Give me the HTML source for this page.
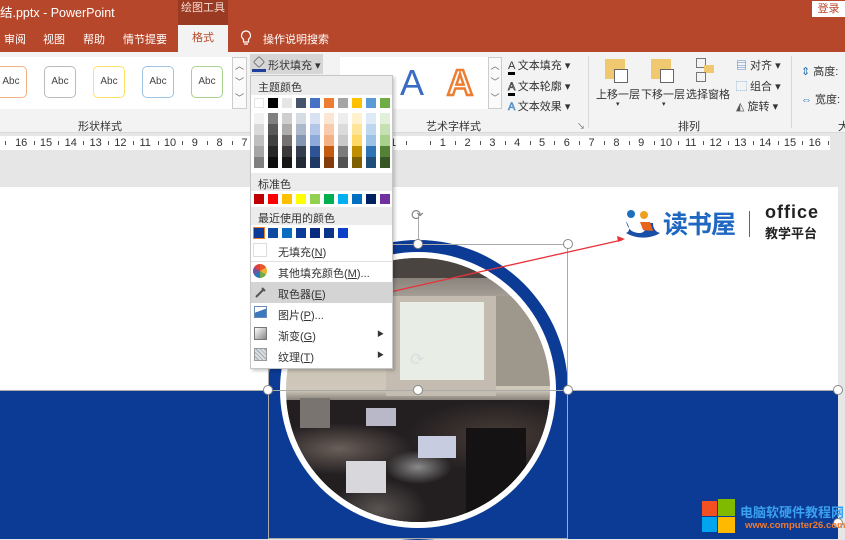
<!DOCTYPE html>
<html><head><meta charset="utf-8"><style>
*{margin:0;padding:0;box-sizing:border-box}
body{width:845px;height:539px;position:relative;overflow:hidden;font-family:"Liberation Sans","Noto Sans CJK SC",sans-serif;font-size:11px;color:#333;background:#e6e6e6}
.a{position:absolute}
.sw{position:absolute;width:10px;height:10px}
.mi{position:absolute;left:28px;font-size:11px;color:#333}
.abc{position:absolute;top:66px;width:32px;height:32px;border-radius:5px;border:1.5px solid;background:#fff;font-size:10px;text-align:center;line-height:30px;color:#444}
.rn{position:absolute;top:136px;font-size:11px;line-height:14px;color:#333;width:20px;margin-left:-10px;text-align:center}
.rt{position:absolute;top:141px;width:1px;height:4px;background:#555}
</style></head><body>
<div class="a" style="left:0;top:0;width:845px;height:52px;background:#B7472A"></div>
<div class="a" style="left:0;top:2px;color:#fff;font-size:12.5px">结.pptx - PowerPoint</div>
<div class="a" style="left:178px;top:0;width:50px;height:25px;background:#9A3A22;color:#f5d9d0;font-size:11px;text-align:center;line-height:17px">绘图工具</div>
<div class="a" style="left:812px;top:1px;width:33px;height:16px;background:#fff;color:#B7472A;font-size:11px;text-align:center;line-height:16px">登录</div>
<div class="a" style="left:4px;top:31px;color:#fff;font-size:11px">审阅</div>
<div class="a" style="left:43px;top:31px;color:#fff;font-size:11px">视图</div>
<div class="a" style="left:83px;top:31px;color:#fff;font-size:11px">帮助</div>
<div class="a" style="left:123px;top:31px;color:#fff;font-size:11px">情节提要</div>
<div class="a" style="left:178px;top:25px;width:50px;height:27px;background:#F3F3F3;color:#B7472A;font-size:11px;text-align:center;line-height:26px">格式</div>
<svg class="a" style="left:240px;top:30px" width="12" height="16"><path d="M6 1a4.5 4.5 0 0 0-2.5 8.2V12h5V9.2A4.5 4.5 0 0 0 6 1zM4 14h4" fill="none" stroke="#fff" stroke-width="1.2"/></svg>
<div class="a" style="left:263px;top:31px;color:#fff;font-size:11px">操作说明搜索</div>
<div class="a" style="left:0;top:52px;width:845px;height:81px;background:#F3F3F3;border-bottom:1px solid #dadada"></div>
<div class="a" style="left:0;top:57px;width:232px;height:52px;background:#fff"></div>
<div class="abc" style="left:-5px;border-color:#F4B183">Abc</div>
<div class="abc" style="left:44px;border-color:#bbb">Abc</div>
<div class="abc" style="left:93px;border-color:#FFE066">Abc</div>
<div class="abc" style="left:142px;border-color:#9DC3E6">Abc</div>
<div class="abc" style="left:191px;border-color:#A9D18E">Abc</div>
<div class="a" style="left:232px;top:57px;width:15px;height:52px;border:1px solid #ccc;background:#fafafa;font-size:9px;color:#666;text-align:center;line-height:16px">︿<br>﹀<br>﹀</div>
<div class="a" style="left:78px;top:118px">形状样式</div>
<div class="a" style="left:250px;top:54px;width:73px;height:20px;background:#d6d6d6"></div>
<div class="a" style="left:253px;top:56px;width:12px;height:12px;border:1px solid #555;border-radius:2px;transform:rotate(45deg) scale(.7)"></div>
<div class="a" style="left:252px;top:69px;width:14px;height:3px;background:#1f3f9a"></div>
<div class="a" style="left:268px;top:57px;font-size:11px">形状填充 ▾</div>
<div class="a" style="left:340px;top:57px;width:148px;height:52px;background:#fff"></div>
<div class="a" style="left:400px;top:62px;font-size:36px;color:#3a6bc4">A</div>
<div class="a" style="left:447px;top:62px;font-size:36px;color:#fff;-webkit-text-stroke:2.5px #ED7D31;font-weight:bold">A</div>
<div class="a" style="left:488px;top:57px;width:14px;height:52px;border:1px solid #ccc;background:#fafafa;font-size:9px;color:#666;text-align:center;line-height:16px">︿<br>﹀<br>﹀</div>
<div class="a" style="left:508px;top:57px;font-size:11px"><span style="border-bottom:3px solid #000">A</span> 文本填充 ▾</div>
<div class="a" style="left:508px;top:78px;font-size:11px"><span style="border-bottom:3px solid #000;color:#fff;-webkit-text-stroke:.7px #333">A</span> 文本轮廓 ▾</div>
<div class="a" style="left:508px;top:98px;font-size:11px"><span style="color:#9DC3E6;-webkit-text-stroke:.5px #2e75b6">A</span> 文本效果 ▾</div>
<div class="a" style="left:426px;top:118px">艺术字样式</div>
<div class="a" style="left:588px;top:56px;width:1px;height:72px;background:#d8d8d8"></div>
<div class="a" style="left:605px;top:59px;width:20px;height:20px;background:#F0C870"></div>
<div class="a" style="left:614px;top:69px;width:14px;height:14px;border:1px solid #666;background:#fff"></div>
<div class="a" style="left:651px;top:59px;width:20px;height:20px;background:#F0C870"></div>
<div class="a" style="left:660px;top:69px;width:14px;height:14px;border:1px solid #666;background:#fff;z-index:1"></div>
<div class="a" style="left:696px;top:58px;width:10px;height:10px;border:1px solid #777"></div>
<div class="a" style="left:704px;top:65px;width:10px;height:8px;background:#F0C870"></div>
<div class="a" style="left:696px;top:72px;width:10px;height:10px;border:1px solid #777"></div>
<div class="a" style="left:596px;top:86px;font-size:11px">上移一层</div>
<div class="a" style="left:641px;top:86px;font-size:11px">下移一层</div>
<div class="a" style="left:686px;top:86px;font-size:11px">选择窗格</div>
<div class="a" style="left:616px;top:100px;font-size:7px">▾</div>
<div class="a" style="left:662px;top:100px;font-size:7px">▾</div>
<div class="a" style="left:736px;top:57px;font-size:11px"><span style="color:#2e75b6">▤</span> 对齐 ▾</div>
<div class="a" style="left:736px;top:78px;font-size:11px"><span style="color:#2e75b6">⬚</span> 组合 ▾</div>
<div class="a" style="left:736px;top:98px;font-size:11px"><span style="color:#555">◭</span> 旋转 ▾</div>
<div class="a" style="left:678px;top:118px">排列</div>
<div class="a" style="left:791px;top:56px;width:1px;height:72px;background:#d8d8d8"></div>
<div class="a" style="left:801px;top:63px;font-size:11px"><span style="color:#2e75b6">⇕</span> 高度:</div>
<div class="a" style="left:801px;top:91px;font-size:11px"><span style="color:#2e75b6">⇔</span> 宽度:</div>
<div class="a" style="left:838px;top:118px">大</div>
<div class="a" style="left:577px;top:121px;font-size:8px;color:#666">↘</div>
<div class="a" style="left:0;top:136px;width:830px;height:14px;background:#fff"></div>
<div id="ruler"></div>
<div class="a" style="left:0;top:187px;width:838px;height:352px;background:#fff"></div>
<div class="a" style="left:0;top:390px;width:838px;height:149px;background:#0B3B94"></div>
<div class="a" style="left:268px;top:240px;width:300px;height:300px;border-radius:50%;background:#0B3B94"></div>
<div class="a" style="left:280px;top:252px;width:276px;height:276px;border-radius:50%;background:#fff"></div>
<div class="a" style="left:286px;top:258px;width:264px;height:264px;border-radius:50%;overflow:hidden;background:linear-gradient(180deg,#6e6660 0%,#9a948c 12%,#c6bfb2 22%,#cfc8ba 50%,#3a3536 58%,#2a2628 100%)">
 <div class="a" style="left:0;top:0;width:264px;height:20px;background:#4a4440"></div>
 <div class="a" style="left:60px;top:28px;width:40px;height:8px;background:#f4f4f4"></div>
 <div class="a" style="left:110px;top:50px;width:35px;height:7px;background:#f0f0f0"></div>
 <div class="a" style="left:195px;top:38px;width:110px;height:90px;background:#9e978c"></div>
 <div class="a" style="left:100px;top:38px;width:110px;height:100px;background:#c4bcb0"></div>
 <div class="a" style="left:114px;top:44px;width:84px;height:78px;background:#e8ede6"></div>
 <div class="a" style="left:0;top:142px;width:264px;height:122px;background:radial-gradient(ellipse at 20% 40%,#6a5e58 0,transparent 25%),radial-gradient(ellipse at 50% 55%,#8a8a8a 0,transparent 18%),radial-gradient(ellipse at 80% 30%,#4a3e38 0,transparent 30%),radial-gradient(ellipse at 35% 90%,#5a5552 0,transparent 20%),#231f21"></div>
 <div class="a" style="left:60px;top:203px;width:40px;height:32px;background:#d8d8dc"></div>
 <div class="a" style="left:80px;top:150px;width:30px;height:18px;background:#b8b8c8"></div>
 <div class="a" style="left:132px;top:178px;width:38px;height:22px;background:#c8cce0"></div>
 <div class="a" style="left:180px;top:170px;width:60px;height:94px;background:#151213"></div>
 <div class="a" style="left:14px;top:140px;width:30px;height:30px;background:#7a7470"></div>
</div>
<div class="a" style="left:268px;top:244px;width:300px;height:295px;border:1px solid #aaa"></div>
<div class="a" style="left:0;top:390px;width:838px;height:1px;background:#aaa"></div>
<div class="a" style="left:418px;top:215px;width:1px;height:29px;background:#aaa"></div>
<div class="a" style="left:411px;top:206px;font-size:15px;color:#888">⟳</div>
<div class="a" style="left:410px;top:350px;font-size:17px;color:#ddd">⟳</div>
<div class="a" style="left:413px;top:239px;width:10px;height:10px;border-radius:50%;border:1px solid #888;background:#fff"></div>
<div class="a" style="left:563px;top:239px;width:10px;height:10px;border-radius:50%;border:1px solid #888;background:#fff"></div>
<div class="a" style="left:263px;top:385px;width:10px;height:10px;border-radius:50%;border:1px solid #888;background:#fff"></div>
<div class="a" style="left:563px;top:385px;width:10px;height:10px;border-radius:50%;border:1px solid #888;background:#fff"></div>
<div class="a" style="left:413px;top:385px;width:10px;height:10px;border-radius:50%;border:1px solid #888;background:#fff"></div>
<div class="a" style="left:833px;top:385px;width:10px;height:10px;border-radius:50%;border:1px solid #888;background:#fff"></div>
<div class="a" style="left:833px;top:518px;width:10px;height:10px;border-radius:50%;border:1px solid #888;background:#fff"></div>
<svg class="a" style="left:620px;top:205px" width="42" height="38"><circle cx="11" cy="9" r="4" fill="#1f6fc0"/><circle cx="24" cy="10" r="4" fill="#f0a020"/><path d="M6 16c2 10 8 12 14 12 5 0 7-6 7-10h6c0 6 3 9 7 10-6 4-20 8-34 0 3-1 5-4 0-12z" fill="#1a4fa8"/><path d="M20 17h10l3 9-10-1z" fill="#e8641c"/></svg>
<div class="a" style="left:663px;top:205px;font-size:25px;color:#1f67c0;font-weight:bold;letter-spacing:-1px">读书屋</div>
<div class="a" style="left:749px;top:211px;width:1px;height:26px;background:#666"></div>
<div class="a" style="left:765px;top:202px;font-size:18px;font-weight:bold;color:#222;letter-spacing:1px">office</div>
<div class="a" style="left:765px;top:223px;font-size:13px;font-weight:bold;color:#222">教学平台</div>
<svg class="a" style="left:0;top:0" width="845" height="539"><line x1="372" y1="296" x2="622" y2="240" stroke="#e8323a" stroke-width="1.3"/><path d="M625 239l-8-3 1 6z" fill="#e8323a"/></svg>
<div class="a" style="left:702px;top:501px;width:15px;height:15px;background:#f25022"></div>
<div class="a" style="left:718px;top:499px;width:17px;height:17px;background:#7fba00"></div>
<div class="a" style="left:702px;top:517px;width:15px;height:15px;background:#00a4ef"></div>
<div class="a" style="left:718px;top:517px;width:17px;height:16px;background:#ffb900"></div>
<div class="a" style="left:740px;top:502px;font-size:13px;color:#3aa0f0;font-weight:bold">电脑软硬件教程网</div>
<div class="a" style="left:745px;top:520px;font-size:9.5px;color:#f07a30;font-weight:bold">www.computer26.com</div>
<div class="a" style="left:250px;top:75px;width:143px;height:294px;background:#fff;border:1px solid #c6c6c6;box-shadow:2px 2px 3px rgba(0,0,0,.2)"></div>
<div class="a" style="left:251px;top:76px;width:141px;height:19px;background:#ececec"></div>
<div class="a" style="left:258px;top:79px">主题颜色</div>
<div class="a" style="left:251px;top:173px;width:141px;height:18px;background:#ececec"></div>
<div class="a" style="left:258px;top:176px">标准色</div>
<div class="a" style="left:251px;top:207px;width:141px;height:18px;background:#ececec"></div>
<div class="a" style="left:258px;top:210px">最近使用的颜色</div>
<div id="grid"></div>
<div class="a" style="left:253px;top:243px;width:14px;height:14px;border:1px solid #ddd"></div>
<div class="mi" style="left:278px;top:244px">无填充(<u>N</u>)</div>
<div class="a" style="left:251px;top:261px;width:141px;height:1px;background:#e0e0e0"></div>
<div class="a" style="left:253px;top:264px;width:14px;height:14px;border-radius:50%;background:conic-gradient(#e85a2a 0 60deg,#f0b030 0 120deg,#70ad47 0 180deg,#2e75b6 0 240deg,#7c4ea0 0 300deg,#e04040 0)"></div>
<div class="mi" style="left:278px;top:265px">其他填充颜色(<u>M</u>)...</div>
<div class="a" style="left:251px;top:282px;width:141px;height:21px;background:#d4d4d4"></div>
<svg class="a" style="left:254px;top:285px" width="14" height="14"><path d="M2 12l7-7M8 3l3 3" stroke="#555" stroke-width="2"/></svg>
<div class="mi" style="left:278px;top:286px">取色器(<u>E</u>)</div>
<div class="a" style="left:254px;top:306px;width:13px;height:12px;border:1px solid #6a8ab8;background:linear-gradient(160deg,#fff 40%,#3a78c0 41%)"></div>
<div class="mi" style="left:278px;top:307px">图片(<u>P</u>)...</div>
<div class="a" style="left:254px;top:327px;width:13px;height:13px;border:1px solid #777;background:linear-gradient(135deg,#fff,#888)"></div>
<div class="mi" style="left:278px;top:328px">渐变(<u>G</u>)</div>
<div class="a" style="left:377px;top:329px;font-size:7px">▶</div>
<div class="a" style="left:254px;top:348px;width:13px;height:13px;border:1px solid #999;background:repeating-linear-gradient(45deg,#ddd 0 2px,#9ab 2px 3px)"></div>
<div class="mi" style="left:278px;top:349px">纹理(<u>T</u>)</div>
<div class="a" style="left:377px;top:350px;font-size:7px">▶</div>
<script>
var r='';
for(var n=1;n<=16;n++){[-1,1].forEach(function(s){var x=418+s*n*24.8;r+='<div class="rn" style="left:'+x+'px">'+n+'</div>';r+='<div class="rt" style="left:'+(x-s*12.4)+'px"></div>';});}
r+='<div class="rt" style="left:5px"></div><div class="rt" style="left:828px"></div>';
document.getElementById('ruler').innerHTML=r;
var xs=[254,268,282,296,310,324,338,352,366,380];
var base=['#FFFFFF','#000000','#E7E6E6','#44546A','#4472C4','#ED7D31','#A5A5A5','#FFC000','#5B9BD5','#70AD47'];
var sh=[['#F2F2F2','#D9D9D9','#BFBFBF','#A6A6A6','#808080'],['#808080','#595959','#404040','#262626','#0D0D0D'],['#D0CECE','#AEABAB','#757171','#3A3838','#171616'],['#D6DCE4','#ADB9CA','#8496B0','#333F4F','#222A35'],['#D9E2F3','#B4C6E7','#8EAADB','#2F5496','#1F3864'],['#FBE5D5','#F7CBAC','#F4B183','#C55A11','#833C0B'],['#EDEDED','#DBDBDB','#C9C9C9','#7B7B7B','#525252'],['#FFF2CC','#FEE599','#FFD965','#BF8F00','#7F6000'],['#DEEBF6','#BDD7EE','#9CC3E5','#2E75B5','#1E4E79'],['#E2EFD9','#C5E0B3','#A8D08D','#538135','#375623']];
var std=['#C00000','#FF0000','#FFC000','#FFFF00','#92D050','#00B050','#00B0F0','#0070C0','#002060','#7030A0'];
var rec=['#0B3B94','#0D4AA0','#0A6EC0','#0B3A98','#0A2C80','#0A3488','#0A40C8'];
var h='';
for(var i=0;i<10;i++){h+='<div class="sw" style="left:'+xs[i]+'px;top:98px;background:'+base[i]+';'+(i==0?'border:1px solid #e6e6e6':'')+'"></div>';
for(var j=0;j<5;j++)h+='<div class="sw" style="left:'+xs[i]+'px;top:'+(113+j*11)+'px;height:11px;background:'+sh[i][j]+'"></div>';
h+='<div class="sw" style="left:'+xs[i]+'px;top:194px;background:'+std[i]+'"></div>';}
for(var k=0;k<7;k++)h+='<div class="sw" style="left:'+xs[k]+'px;top:228px;background:'+rec[k]+';'+(k==0?'outline:1.5px solid #ED7D31':'')+'"></div>';
document.getElementById('grid').innerHTML=h;
</script>
</body></html>
